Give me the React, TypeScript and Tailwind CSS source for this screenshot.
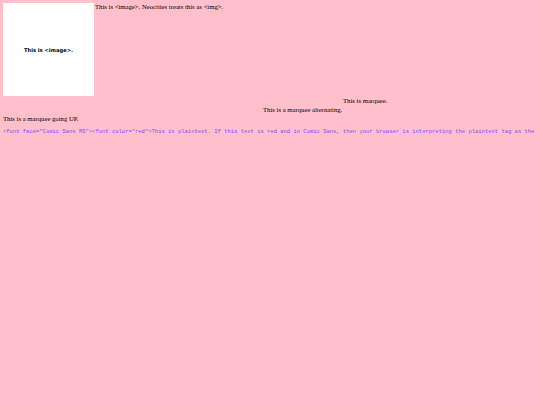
import React from 'react';

const App = (): JSX.Element => {
  return (
    <div className="min-h-[405px] w-full overflow-hidden bg-[#ffc0cb] p-[3px] text-[6.7px] leading-[8px] text-black font-['Liberation_Serif',serif]">
      <div className="flex items-start">
        <div className="flex h-[93px] w-[91px] shrink-0 items-center justify-center bg-white">
          <span className="font-['DejaVu_Sans',Verdana,sans-serif] text-[5.2px] font-bold">This is &lt;image&gt;.</span>
        </div>
        <p className="pl-[1px]">This is &lt;image&gt;. Neocities treats this as &lt;img&gt;.</p>
      </div>
      <div className="h-[9px] overflow-hidden whitespace-nowrap pl-[340px] pt-[1px]">This is marquee.</div>
      <div className="h-[9px] overflow-hidden whitespace-nowrap pl-[260px] pt-[1px]">This is a marquee alternating.</div>
      <div className="h-[14px] overflow-hidden whitespace-nowrap pt-[1px]">This is a marquee going UP.</div>
      <pre className="overflow-hidden whitespace-pre font-['Liberation_Mono','Courier_New',monospace] text-[5.5px] leading-[7px] text-[#7c4dff]">
        {'<font face="Comic Sans MS"><font color="red">This is plaintext. If this text is red and in Comic Sans, then your browser is interpreting the plaintext tag as the parent of the font tags.'}
      </pre>
    </div>
  );
};

export default App;
